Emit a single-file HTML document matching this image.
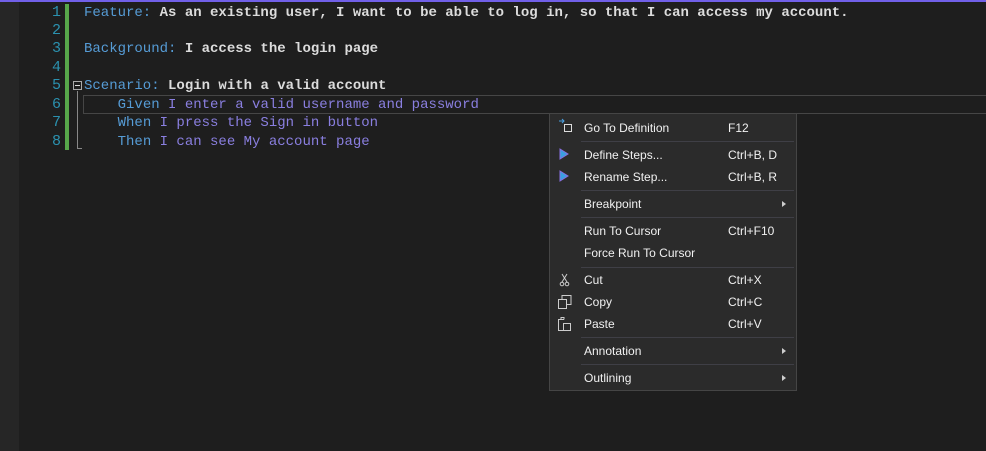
<!DOCTYPE html><html><head><style>
body{margin:0;width:986px;height:451px;background:#1e1e1e;overflow:hidden;position:relative;font-family:"Liberation Mono",monospace;}
.top{position:absolute;left:0;top:0;width:986px;height:2px;background:#7160e8}
.gut{position:absolute;left:0;top:2px;width:19px;height:449px;background:#262626}
.ln{position:absolute;left:30px;width:31px;text-align:right;color:#2b91af;font-size:15px}
.code{position:absolute;left:84px;font-size:14px;font-weight:bold;color:#dcdcdc;white-space:pre}
.k{color:#569cd6;font-weight:normal}.s{color:#8a7fe0;font-weight:normal}.sk{color:#569cd6;font-weight:normal}
.green{position:absolute;left:65px;top:4px;width:4px;height:146px;background:#57a64a}
.cur{position:absolute;left:83px;top:95px;width:903px;height:17px;border:1px solid #464646;border-right:none}
.menu{position:absolute;left:549px;top:113px;width:246px;height:276px;background:#2b2b2b;border:1px solid #454545;font-family:"Liberation Sans",sans-serif;font-size:12px;color:#f1f1f1}
.it{position:absolute;left:34px}.sc{position:absolute;left:178px}
.sep{position:absolute;left:31px;width:213px;height:1px;background:#3f3f46}
.ar{position:absolute;left:232px;width:0;height:0;border-left:4px solid #ccc;border-top:3.5px solid transparent;border-bottom:3.5px solid transparent}
</style></head><body>
<div class="top"></div><div class="gut"></div><div class="green"></div>
<div class="ln" style="top:4px">1</div><div class="ln" style="top:22px">2</div><div class="ln" style="top:40px">3</div><div class="ln" style="top:59px">4</div><div class="ln" style="top:77px">5</div><div class="ln" style="top:96px">6</div><div class="ln" style="top:114px">7</div><div class="ln" style="top:133px">8</div>
<div class="cur"></div>
<div style="position:absolute;left:73px;top:81px;width:7px;height:7px;border:1px solid #aaa"></div>
<div style="position:absolute;left:75px;top:85px;width:5px;height:1px;background:#ddd"></div>
<div style="position:absolute;left:77px;top:91px;width:1px;height:58px;background:#888"></div>
<div style="position:absolute;left:77px;top:148px;width:5px;height:1px;background:#888"></div>
<div class="code" style="top:5px"><span class="k">Feature:</span> As an existing user, I want to be able to log in, so that I can access my account.</div>
<div class="code" style="top:41px"><span class="k">Background:</span> I access the login page</div>
<div class="code" style="top:78px"><span class="k">Scenario:</span> Login with a valid account</div>
<div class="code" style="top:97px">    <span class="sk">Given</span><span class="s"> I enter a valid username and password</span></div>
<div class="code" style="top:115px">    <span class="sk">When</span><span class="s"> I press the Sign in button</span></div>
<div class="code" style="top:134px">    <span class="sk">Then</span><span class="s"> I can see My account page</span></div>
<div class="menu">
<svg style="position:absolute;left:8px;top:4px" width="16" height="16"><path d="M1 3h5M4 1l2 2-2 2" stroke="#4aa0e0" fill="none"/><rect x="6.5" y="6.5" width="7" height="7" stroke="#ddd" fill="none"/></svg>
<div class="it" style="top:7px">Go To Definition</div><div class="sc" style="top:7px">F12</div>
<div class="sep" style="top:27px"></div>
<svg style="position:absolute;left:9px;top:34px" width="10" height="12"><path d="M1 1L9 6L1 11Z" fill="#3a9fe0" stroke="#8a6fe0"/></svg>
<div class="it" style="top:34px">Define Steps...</div><div class="sc" style="top:34px">Ctrl+B, D</div>
<svg style="position:absolute;left:9px;top:56px" width="10" height="12"><path d="M1 1L9 6L1 11Z" fill="#3a9fe0" stroke="#8a6fe0"/></svg>
<div class="it" style="top:56px">Rename Step...</div><div class="sc" style="top:56px">Ctrl+B, R</div>
<div class="sep" style="top:76px"></div>
<div class="it" style="top:83px">Breakpoint</div><div class="ar" style="top:87px"></div>
<div class="sep" style="top:103px"></div>
<div class="it" style="top:110px">Run To Cursor</div><div class="sc" style="top:110px">Ctrl+F10</div>
<div class="it" style="top:132px">Force Run To Cursor</div>
<div class="sep" style="top:153px"></div>
<svg style="position:absolute;left:9px;top:159px" width="12" height="14"><path d="M3 1L8 9M8 1L3 9" stroke="#ccc"/><circle cx="3" cy="11" r="1.8" stroke="#ccc" fill="none"/><circle cx="8" cy="11" r="1.8" stroke="#ccc" fill="none"/></svg>
<div class="it" style="top:159px">Cut</div><div class="sc" style="top:159px">Ctrl+X</div>
<svg style="position:absolute;left:7px;top:180px" width="16" height="16"><rect x="1.5" y="5.5" width="8" height="9" stroke="#ccc" fill="none"/><path d="M5 5V1.5h9v9h-4" stroke="#ccc" fill="none"/></svg>
<div class="it" style="top:181px">Copy</div><div class="sc" style="top:181px">Ctrl+C</div>
<svg style="position:absolute;left:7px;top:201px" width="16" height="16"><path d="M7 4.5H1.5v11h5M4 4.5V2.5h3v2" stroke="#ccc" fill="none"/><rect x="6.5" y="8.5" width="7" height="7" stroke="#ccc" fill="none"/></svg>
<div class="it" style="top:203px">Paste</div><div class="sc" style="top:203px">Ctrl+V</div>
<div class="sep" style="top:223px"></div>
<div class="it" style="top:230px">Annotation</div><div class="ar" style="top:234px"></div>
<div class="sep" style="top:250px"></div>
<div class="it" style="top:257px">Outlining</div><div class="ar" style="top:261px"></div>
</div>
</body></html>
